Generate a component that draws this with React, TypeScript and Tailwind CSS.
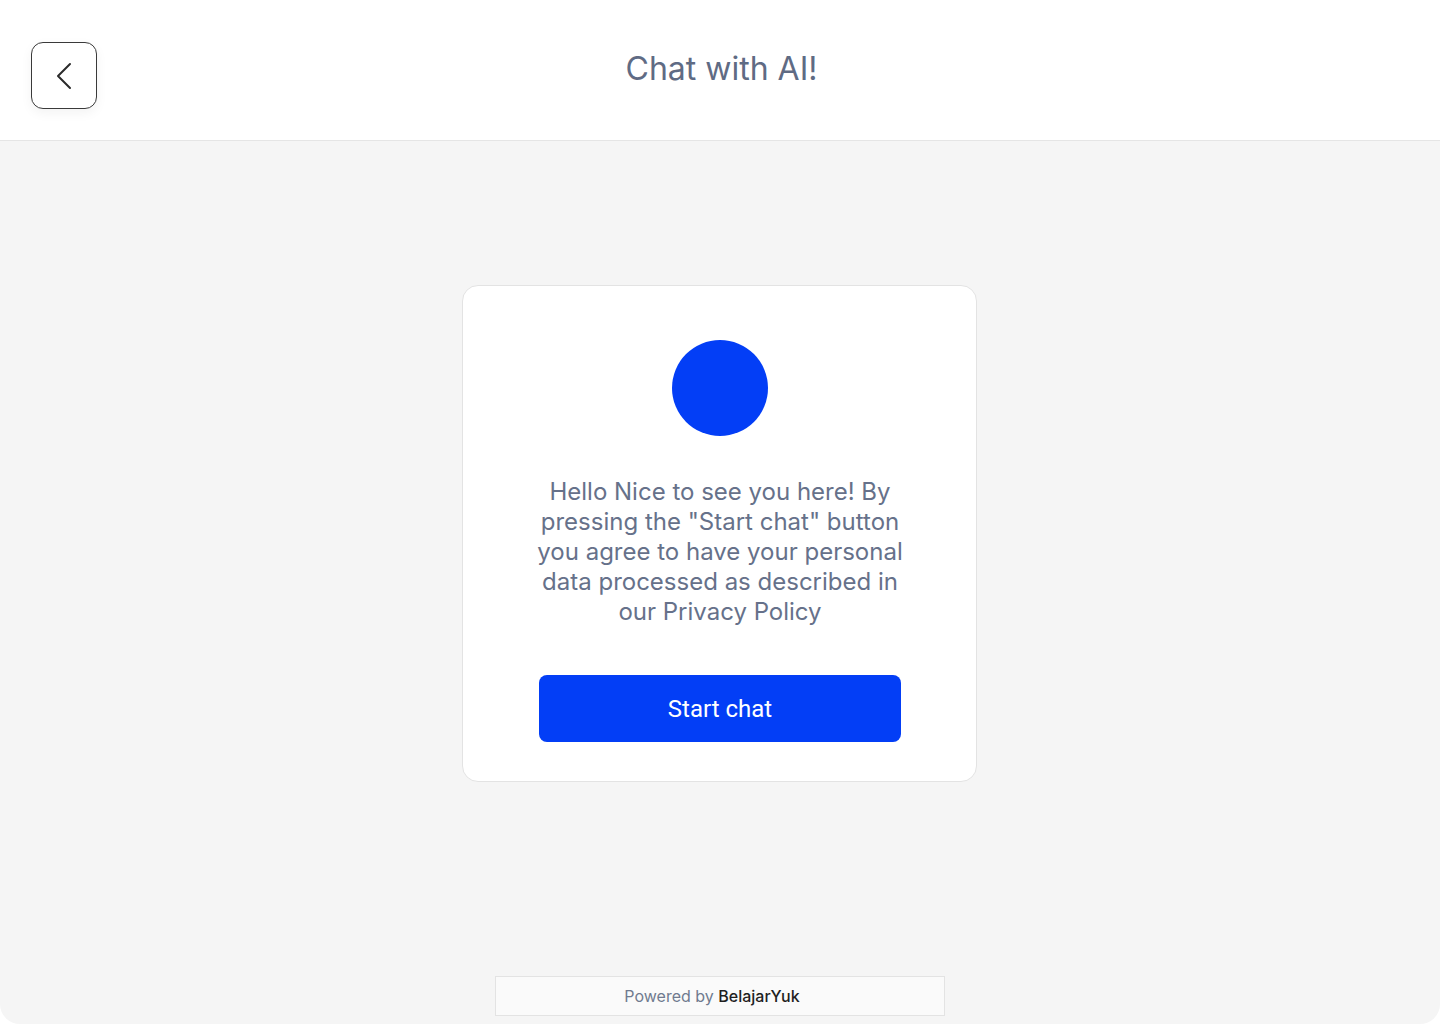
import { ChevronLeft } from 'lucide-react';

export default function App() {
  return (
    <div className="w-[1440px] h-[1024px] bg-white" style={{ fontFamily: 'Inter, "Noto Sans", sans-serif' }}>
      <div className="flex h-full flex-col overflow-hidden rounded-b-[20px] bg-[#f5f5f5]">
        <header className="relative flex h-[141px] shrink-0 items-start justify-center border-b border-[#e5e5e5] bg-white">
          <button className="absolute left-[31px] top-[42px] flex h-[67px] w-[66px] items-center justify-center rounded-[12px] border border-[#3a3a3a] bg-white shadow-[0_4px_12px_rgba(0,0,0,0.05)]">
            <ChevronLeft size={48} strokeWidth={1} className="text-[#2b2b2b]" />
          </button>
          <h1 className="mt-[49px] pl-[3px] text-[32px] leading-[40px] font-normal text-[#5f6b84]">Chat with AI!</h1>
        </header>

        <main className="flex flex-1 flex-col items-center pt-[144px]">
          <div className="-ml-[2px] flex w-[515px] flex-col items-center rounded-[16px] border border-[#e3e3e3] bg-white pl-[77px] pr-[75px] pt-[54px] pb-[39px]">
            <div className="h-[96px] w-[96px] rounded-full bg-[#033ef6]" />
            <p className="mt-[41px] w-[370px] text-center text-[24px] leading-[30px] text-[#66718a]">
              Hello Nice to see you here! By pressing the "Start chat" button you agree to have your personal data processed as described in our Privacy Policy
            </p>
            <button
              className="mt-[48px] h-[67px] w-[362px] rounded-[8px] bg-[#033ef6] text-[24px] text-white"
              style={{ fontFamily: 'Roboto, sans-serif' }}
            >
              Start chat
            </button>
          </div>
        </main>

        <footer className="mb-[8px] flex justify-center">
          <div className="flex h-[40px] w-[450px] items-center justify-center border border-[#e3e3e3] bg-[#fafafa] pr-[16px] text-[16px]">
            <span className="text-[#707a8f]">Powered by&nbsp;</span>
            <span className="font-medium text-[#1f1f1f]">BelajarYuk</span>
          </div>
        </footer>
      </div>
    </div>
  );
}
